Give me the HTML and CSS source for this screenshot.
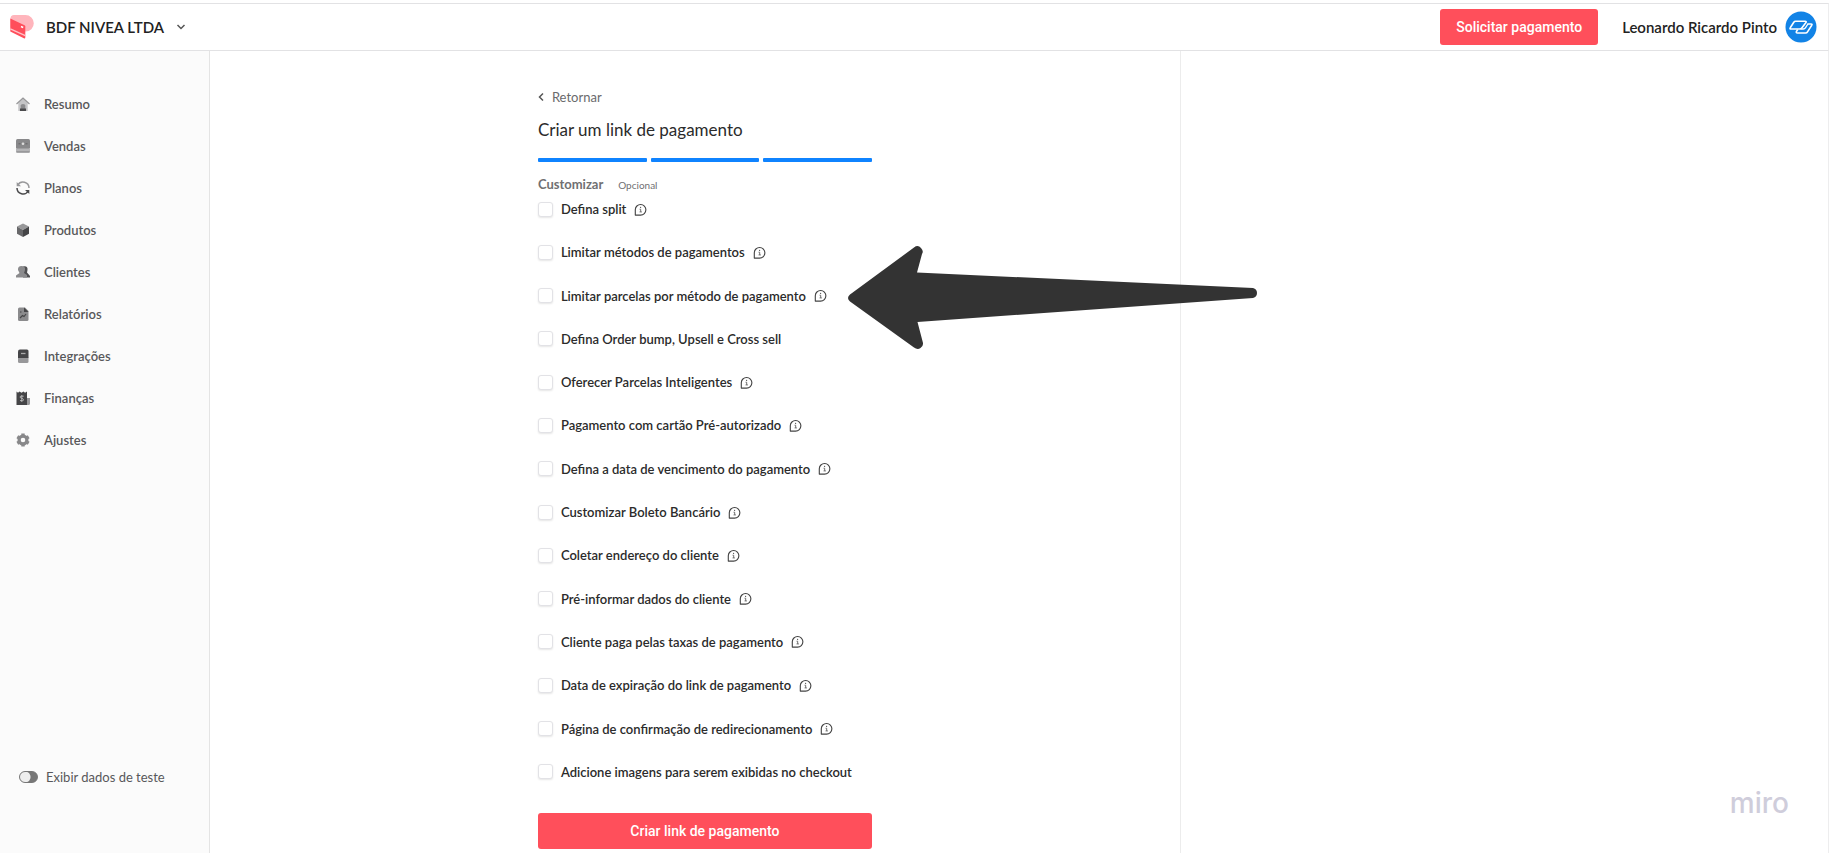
FILE: index.html
```html
<!DOCTYPE html>
<html lang="pt-BR">
<head>
    <meta charset="UTF-8">
    <meta name="viewport" content="width=device-width, initial-scale=1.0">
    <title>Criar um link de pagamento</title>
    <link rel="stylesheet" href="styles.css">
</head>
<body>
    <!-- Ícone de informação usado em cada opção -->
    <svg class="sprite" aria-hidden="true">
        <symbol id="info" viewBox="0 0 14 14">
            <path d="M1.4 13V7.200A5.700 5.700 0 1 1 7.100 13Z" fill="none" stroke="#444" stroke-width="1.200" stroke-linejoin="round"/>
            <path d="M6 6.700H7.200V9.500M6 9.600H8.500" fill="none" stroke="#555" stroke-width=".9"/>
            <circle cx="7.100" cy="4.700" r=".7" fill="#444"/>
        </symbol>
    </svg>

    <header class="topbar">
        <button type="button" class="company">
            <svg class="company-logo" viewBox="0 0 24 24" aria-hidden="true">
                <path d="M4 0H15.500A8.300 8.300 0 0 1 15.500 16.600H10L.5 12V3.500A3.500 3.500 0 0 1 4 0Z" fill="#ffb5bc"/>
                <path d="M.3 3.600 14.500 10.200Q15.300 10.700 15.300 11.600V22.500Q15.200 23.900 13.800 23.300L.3 16.500Z" fill="#ff4e5b"/>
                <path d="M.3 13.800 15.300 20.700" stroke="#ffc3c8" stroke-width="1.300"/>
                <path d="M11 11.500 13.200 12.500" stroke="#fff" stroke-width="1.500"/>
            </svg>
            <span>BDF NIVEA LTDA</span>
            <svg class="chevron" viewBox="0 0 10 10" aria-hidden="true"><path d="M1.500 3 5 6.500 8.500 3" fill="none" stroke="#555" stroke-width="1.500"/></svg>
        </button>
        <div class="topbar-right">
            <button type="button" class="btn btn-top">Solicitar pagamento</button>
            <button type="button" class="user">
                <span>Leonardo Ricardo Pinto</span>
                <svg class="avatar" viewBox="0 0 32 32" aria-hidden="true">
                    <circle cx="16" cy="16" r="15.500" fill="#1283e6"/>
                    <path d="M10.500 10.200H20Q22 10.200 20.800 11.700L17 16.700Q16 18 14.500 18H6Q4.300 18 5.400 16.500L8.800 11.300Q9.500 10.200 10.500 10.200Z" fill="none" stroke="#fff" stroke-width="1.600"/>
                    <path d="M22.300 13H26Q27.700 13 26.600 14.500L22.500 20.800Q21.800 22 20.600 22H12.500Q10.700 22 11.500 20.400L12.700 18.500" fill="none" stroke="#fff" stroke-width="1.600"/>
                    <path d="M15.500 18H18.400Q19.700 18 20.400 16.900L22.900 13" fill="none" stroke="#fff" stroke-width="1.300"/>
                </svg>
            </button>
        </div>
    </header>

    <div class="layout">
        <aside class="sidebar">
            <nav class="menu">
                <a href="#">
                    <svg viewBox="0 0 14 14"><path d="M2.300 6V14H11.700V6L7 2Z" fill="#c4c4c6"/><path d="M.5 7 7 1.200 13.500 7" fill="none" stroke="#98989a" stroke-width="1.300"/><path d="M4.700 14V8.500Q4.700 7 7 7T9.300 8.500V14Z" fill="#8b8b8d"/><path d="M4 11.500H10V14H4Z" fill="#4a4a4c"/></svg>
                    Resumo
                </a>
                <a href="#">
                    <svg viewBox="0 0 14 14"><rect width="14" height="10" rx="1.500" fill="#88888a"/><path d="M0 9.500H14V12.500Q14 14 12.500 14H1.500Q0 14 0 12.500Z" fill="#b4b4b6"/><path d="M.5 12.800H13.500" stroke="#8e8e90"/><circle cx="7" cy="4.800" r="1.300" fill="#ddd"/><path d="M2.500 4.800H4.500M9.500 4.800H11.500" stroke="#666"/></svg>
                    Vendas
                </a>
                <a href="#">
                    <svg viewBox="0 0 14 14"><path d="M1.800 4A6 6 0 0 1 13 7" fill="none" stroke="#98989a" stroke-width="1.500"/><path d="M.7 1V5.300H5Z" fill="#98989a"/><path d="M12.200 10A6 6 0 0 1 1 7" fill="none" stroke="#4a4a4c" stroke-width="1.500"/><path d="M13.300 13V9H9Z" fill="#4a4a4c"/></svg>
                    Planos
                </a>
                <a href="#">
                    <svg viewBox="0 0 14 14"><path d="M7 .5 13 3.500 7 7 1 3.500Z" fill="#98989a"/><path d="M1 3.500 7 7V14L1 10.700Z" fill="#68686a"/><path d="M13 3.500 7 7V14L13 10.700Z" fill="#454547"/></svg>
                    Produtos
                </a>
                <a href="#">
                    <svg viewBox="0 0 14 14"><path d="M7 1.500Q12 .5 11.500 5L11 7.500 14 11V12.500H7Z" fill="#505052"/><path d="M5.500 1Q9.500 1 9 5L8 8 11 10V12.500H0V10.500L3.500 8 2 5Q1.700 1 5.500 1Z" fill="#8b8b8d"/></svg>
                    Clientes
                </a>
                <a href="#">
                    <svg viewBox="0 0 14 14"><path d="M3.500 .5H9L12.500 4V12.500Q12.500 14 11 14H3.500Q2 14 2 12.500V2Q2 .5 3.500 .5Z" fill="#8b8b8d"/><path d="M8 .5 12.500 5H8Z" fill="#454547"/><path d="M4 11 6.500 8.500 8 9.500 10 7" fill="none" stroke="#454547" stroke-width="1.200"/><path d="M4 5H5.500" stroke="#454547"/></svg>
                    Relatórios
                </a>
                <a href="#">
                    <svg viewBox="0 0 14 14"><path d="M2 8.500H12.500V12.500Q12.500 14 11 14H3.500Q2 14 2 12.500Z" fill="#98989a"/><path d="M4 .5H11Q12.500 .5 12.500 2V9H2V2.500Q2 .5 4 .5Z" fill="#454547"/><path d="M5 4.500H9.500" stroke="#aaa" stroke-width="1.300"/></svg>
                    Integrações
                </a>
                <a href="#">
                    <svg viewBox="0 0 14 14"><path d="M9 7H14V12.500Q14 14 12.500 14H9Z" fill="#98989a"/><path d="M.5 .5 2 1.800 3.500 .5 5.500 1.800 7.500 .5 9 1.800 11 .5V14H.5Z" fill="#454547"/><path d="M7.700 5.200H5Q4 5.200 4.200 6.200T5.700 7.300 7.400 8.500 6.500 9.600H4M5.800 4V11" fill="none" stroke="#bbb" stroke-width=".9"/></svg>
                    Finanças
                </a>
                <a href="#">
                    <svg viewBox="0 0 14 14"><circle cx="7" cy="7" r="3.900" fill="none" stroke="#88888a" stroke-width="3.200"/><path d="M7 .4V3M7 11V13.600M1.300 3.700 3.500 5M10.500 9 12.700 10.300M1.300 10.300 3.500 9M10.500 5 12.700 3.700" stroke="#88888a" stroke-width="3.400"/></svg>
                    Ajustes
                </a>
            </nav>
            <label class="test-data">
                <input type="checkbox" role="switch">
                Exibir dados de teste
            </label>
        </aside>

        <main class="content">
            <form class="link-form">
                <a href="#" class="back">
                    <svg class="back-icon" viewBox="0 0 6 10" aria-hidden="true"><path d="M5 1.500 1.500 5 5 8.500" fill="none" stroke="#555" stroke-width="1.500"/></svg>
                    Retornar
                </a>
                <h1>Criar um link de pagamento</h1>
                <div class="steps"><span></span><span></span><span></span></div>
                <h2>Customizar <small>Opcional</small></h2>

                <div class="options">
                    <label><input type="checkbox"> Defina split <svg><use href="#info"/></svg></label>
                    <label><input type="checkbox"> Limitar métodos de pagamentos <svg><use href="#info"/></svg></label>
                    <label><input type="checkbox"> Limitar parcelas por método de pagamento <svg><use href="#info"/></svg></label>
                    <label><input type="checkbox"> Defina Order bump, Upsell e Cross sell</label>
                    <label><input type="checkbox"> Oferecer Parcelas Inteligentes <svg><use href="#info"/></svg></label>
                    <label><input type="checkbox"> Pagamento com cartão Pré-autorizado <svg><use href="#info"/></svg></label>
                    <label><input type="checkbox"> Defina a data de vencimento do pagamento <svg><use href="#info"/></svg></label>
                    <label><input type="checkbox"> Customizar Boleto Bancário <svg><use href="#info"/></svg></label>
                    <label><input type="checkbox"> Coletar endereço do cliente <svg><use href="#info"/></svg></label>
                    <label><input type="checkbox"> Pré-informar dados do cliente <svg><use href="#info"/></svg></label>
                    <label><input type="checkbox"> Cliente paga pelas taxas de pagamento <svg><use href="#info"/></svg></label>
                    <label><input type="checkbox"> Data de expiração do link de pagamento <svg><use href="#info"/></svg></label>
                    <label><input type="checkbox"> Página de confirmação de redirecionamento <svg><use href="#info"/></svg></label>
                    <label><input type="checkbox"> Adicione imagens para serem exibidas no checkout</label>
                </div>

                <button type="submit" class="btn">Criar link de pagamento</button>

                <!-- Seta apontando para a opção de parcelas -->
                <svg class="arrow" viewBox="0 0 410 104" aria-hidden="true">
                    <path d="M2 48.500 66 1.500Q70 -1.500 73 2T74 8L69 26.500 405 42Q409 43 409 47T405 52L69.500 76 75 97Q75.500 100 72.500 102T66 101.500L2 55.500Q-2 52 2 48.500Z" fill="#333"/>
                </svg>
            </form>
        </main>

        <section class="preview"></section>
    </div>

    <span class="watermark">miro</span>
</body>
</html>
```
FILE: styles.css
```css
* {
    box-sizing: border-box;
}
body {
    margin: 0;
    padding-top: 3px;
    min-height: 100vh;
    display: flex;
    flex-direction: column;
    position: relative;
    font-family: Lato, "Open Sans", sans-serif;
    font-size: 13px;
    line-height: 16px;
    color: #2b2b2b;
    background: #fff;
}
a {
    color: inherit;
    text-decoration: none;
}
button {
    font: inherit;
    color: inherit;
    border: none;
    background: none;
    padding: 0;
    cursor: pointer;
}
.sprite {
    display: none;
}

/* Barra superior */
.topbar {
    display: flex;
    align-items: center;
    justify-content: space-between;
    height: 48px;
    padding: 0 11px 0 10px;
    border: 1px solid #e2e2e4;
    border-left: none;
    border-right-color: #ededee;
}
.company,
.user {
    display: flex;
    align-items: center;
    font-size: 15px;
    font-weight: 600;
    color: #222;
}
.company {
    gap: 12px;
}
.company-logo {
    width: 24px;
    height: 24px;
}
.chevron {
    width: 10px;
    height: 10px;
}
.topbar-right {
    display: flex;
    align-items: center;
    gap: 24px;
}
.user {
    gap: 8px;
}
.avatar {
    width: 32px;
    height: 32px;
}
.btn {
    height: 36px;
    border-radius: 3px;
    background: #ff4f5b;
    color: #fff;
    font-family: Roboto, sans-serif;
    font-size: 14px;
    font-weight: 500;
}
.btn-top {
    padding: 0 16px;
}

/* Colunas da página */
.layout {
    flex: 1;
    display: grid;
    grid-template-columns: 210px 3fr 2fr;
    border-right: 1px solid #ededee;
}
.sidebar {
    display: flex;
    flex-direction: column;
    justify-content: space-between;
    padding: 32px 16px 68px;
    background: #fbfbfb;
    border-right: 1px solid #e4e4e4;
}
.menu a {
    display: flex;
    align-items: center;
    gap: 14px;
    height: 42px;
    font-weight: 600;
    color: #58585a;
}
.menu svg {
    width: 14px;
    height: 14px;
}
.test-data {
    display: flex;
    align-items: center;
    gap: 8px;
    padding-left: 3px;
    color: #58585a;
}
.test-data input {
    appearance: none;
    width: 19px;
    height: 12px;
    margin: 0;
    border-radius: 6px;
    border: 1px solid #777;
    background: radial-gradient(circle at 5px 5px, #eee 5px, #777 6px);
}

/* Formulário */
.content {
    display: flex;
    justify-content: center;
    padding: 38px 0 4px 20px;
    border-right: 1px solid #ececec;
}
.link-form {
    position: relative;
    display: flex;
    flex-direction: column;
    width: 334px;
}
.back {
    display: flex;
    align-items: center;
    gap: 8px;
    color: #6a6a6c;
}
.back-icon {
    width: 6px;
    height: 10px;
}
h1 {
    margin: 13px 0 16px;
    font-size: 17px;
    line-height: 24px;
    font-weight: 400;
}
.steps {
    display: flex;
    gap: 4px;
}
.steps span {
    flex: 1;
    height: 4px;
    border-radius: 1px;
    background: #0f83ff;
}
h2 {
    margin: 14px 0 8px;
    font-size: 13px;
    line-height: 16px;
    font-weight: 700;
    color: #707072;
}
h2 small {
    margin-left: 12px;
    font-size: 10px;
    font-weight: 400;
}
.options {
    flex: 1;
    display: flex;
    flex-direction: column;
    align-items: flex-start;
    justify-content: space-between;
    gap: 8px;
    margin-bottom: 33px;
}
.options label {
    display: flex;
    align-items: center;
    gap: 8px;
    font-weight: 600;
    white-space: nowrap;
}
.options input {
    appearance: none;
    width: 15px;
    height: 15px;
    margin: 0;
    border: 1px solid #e2e2e6;
    border-radius: 3px;
    background: #fff;
    box-shadow: 0 1px 2px rgba(0, 0, 0, 0.1);
}
.options input:checked {
    background: #0f83ff;
}
.options svg {
    width: 13px;
    height: 13px;
}
.arrow {
    position: absolute;
    top: 157px;
    left: 310px;
    width: 410px;
    height: 104px;
}
.watermark {
    position: absolute;
    right: 40px;
    bottom: 34px;
    font-family: Inter, sans-serif;
    font-size: 28px;
    line-height: 32px;
    font-weight: 500;
    color: #cfcddb;
}
```
